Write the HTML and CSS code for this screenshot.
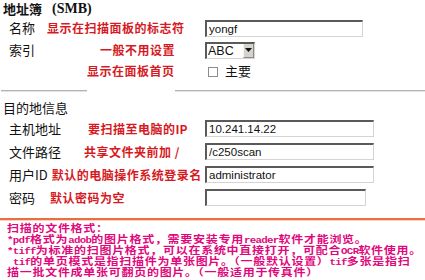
FILE: index.html
```html
<!DOCTYPE html>
<html lang="zh-CN">
<head>
<meta charset="utf-8">
<title>地址簿 (SMB)</title>
<link rel="stylesheet" href="styles.css">
</head>
<body>
<div class="page">
  <div class="title"><span class="title-cjk">地址簿</span><span class="smb">(SMB)</span></div>

  <div class="section top">
    <div class="row r22">
      <div class="lab"><span class="label">名称</span><span class="note n-name">显示在扫描面板的标志符</span></div>
      <div class="field"><input class="txt w158" type="text" value="yongf"></div>
    </div>
    <div class="row r22">
      <div class="lab"><span class="label">索引</span><span class="note n-idx">一般不用设置</span></div>
      <div class="field">
        <div class="select"><span class="sel-val">ABC</span><span class="sel-btn"><svg width="7" height="4" viewBox="0 0 7 4"><path d="M0 0h7L3.5 4z" fill="#111"/></svg></span></div>
      </div>
    </div>
    <div class="row r20">
      <div class="lab"><span class="note n-home">显示在面板首页</span></div>
      <div class="field"><input class="chk" type="checkbox"><span class="label chk-label">主要</span></div>
    </div>
  </div>

  <div class="sep"><span class="seg s1"></span><span class="seg s2"></span></div>

  <div class="group-title">目的地信息</div>

  <div class="section dest">
    <div class="row r23">
      <div class="lab"><span class="label">主机地址</span><span class="note n-host">要扫描至电脑的<span class="note-en">IP</span></span></div>
      <div class="field"><input class="txt w169" type="text" value="10.241.14.22"></div>
    </div>
    <div class="row r23">
      <div class="lab"><span class="label">文件路径</span><span class="note n-path">共享文件夹前加 /</span></div>
      <div class="field"><input class="txt w169" type="text" value="/c250scan"></div>
    </div>
    <div class="row r23">
      <div class="lab"><span class="label">用户ID</span><span class="note n-user">默认的电脑操作系统登录名</span></div>
      <div class="field"><input class="txt w169" type="text" value="administrator"></div>
    </div>
    <div class="row r23">
      <div class="lab"><span class="label">密码</span><span class="note n-pwd">默认密码为空</span></div>
      <div class="field"><input class="txt w161" type="password" value=""></div>
    </div>
  </div>

  <div class="rule"></div>

  <div class="help">
    <div class="line">扫描的文件格式：</div>
    <div class="line"><span class="en">*pdf</span>格式为<span class="en">adob</span>的图片格式，需要安装专用<span class="en">reader</span>软件才能浏览。</div>
    <div class="line"><span class="en">*tiff</span>为标准的扫图片格式，可以在系统中直接打开，可配合<span class="en">OCR</span>软件使用。</div>
    <div class="line indent"><span class="en">tif</span>的单页模式是指扫描件为单张图片。（一般默认设置）<span class="en">tif</span>多张是指扫</div>
    <div class="line">描一批文件成单张可翻页的图片。（一般适用于传真件）</div>
  </div>
</div>
</body>
</html>
```
FILE: styles.css
```css
html, body {
  margin: 0;
  padding: 0;
  background: #ffffff;
}

body {
  font-family: "Noto Sans CJK SC", "Liberation Sans", sans-serif;
  color: #111111;
}

.page {
  width: 425px;
  height: 280px;
  overflow: hidden;
}

/* Title */
.title {
  height: 17px;
  padding-left: 3px;
  line-height: 15px;
  font-weight: bold;
  font-size: 13px;
  display: flex;
  align-items: center;
}

.smb {
  font-family: "Liberation Serif", serif;
  font-size: 14px;
  margin-left: 10px;
}

/* Rows */
.row {
  display: grid;
  grid-template-columns: 205px auto;
  align-items: center;
}

.r22 { height: 22px; }
.r20 { height: 20px; }
.r23 { height: 23px; }

.lab {
  display: flex;
  align-items: center;
  padding-left: 9px;
  white-space: nowrap;
}

.label {
  font-size: 13px;
  line-height: 16px;
}

.note {
  color: #d61a1f;
  font-weight: bold;
  font-size: 12px;
  line-height: 14px;
  letter-spacing: 0.5px;
}

.note-en {
  letter-spacing: 0;
}

.n-name { margin-left: 12px; }
.n-idx  { margin-left: 65px; }
.n-home { margin-left: 78px; }
.n-host { margin-left: 27px; }
.n-path { margin-left: 23px; }
.n-user { margin-left: 4px; }
.n-pwd  { margin-left: 15px; }

.field {
  display: flex;
  align-items: center;
}

/* Inputs */
.txt {
  box-sizing: border-box;
  height: 17px;
  margin: 0;
  padding: 0 2px;
  font-family: "Liberation Sans", Arial, sans-serif;
  font-size: 11.5px;
  color: #111;
  background: #fff;
  border-style: solid;
  border-width: 2px 1px 1px 2px;
  border-color: #5a5a5a #d4d4d4 #d4d4d4 #5a5a5a;
  outline: none;
}

.w158 { width: 158px; }
.w169 { width: 169px; }
.w161 { width: 161px; }

/* Fake select */
.select {
  box-sizing: border-box;
  width: 50px;
  height: 17px;
  display: flex;
  align-items: stretch;
  border-style: solid;
  border-width: 2px 1px 1px 2px;
  border-color: #5a5a5a #d4d4d4 #d4d4d4 #5a5a5a;
  background: #fff;
}

.sel-val {
  flex: 1;
  font-family: "Liberation Sans", Arial, sans-serif;
  font-size: 12.5px;
  line-height: 14px;
  padding-left: 1px;
  color: #111;
}

.sel-btn {
  width: 11px;
  display: flex;
  align-items: center;
  justify-content: center;
  background: #d6d3ce;
  border-left: 1px solid #f4f4f4;
  border-right: 1px solid #8a8a8a;
  border-bottom: 1px solid #8a8a8a;
  box-sizing: border-box;
}

/* Checkbox */
.chk {
  appearance: none;
  -webkit-appearance: none;
  box-sizing: border-box;
  width: 10px;
  height: 10px;
  margin: 1px 0 0 3px;
  border: 1px solid #8c8c8c;
  background: #fff;
}

.chk-label {
  margin-left: 7px;
}

/* Separator */
.sep {
  display: flex;
  justify-content: space-between;
  margin-top: 9px;
  padding-left: 1px;
}

.seg {
  height: 1px;
  border-bottom: 1px solid #e2e2e2;
  background: #b4b4b4;
}

.s1 { width: 86px; }
.s2 { width: 250px; }

.group-title {
  margin-top: 8px;
  padding-left: 3px;
  font-size: 13px;
  line-height: 16px;
  height: 16px;
}

.dest {
  margin-top: 1px;
}

/* Orange rule */
.rule {
  margin-top: 9px;
  height: 2px;
  background: #e8703f;
  border-bottom: 1px solid #f8d3c0;
}

/* Help text */
.help {
  padding: 2px 0 0 7px;
  color: #e0087c;
  font-family: "Liberation Serif", "Noto Sans CJK SC", serif;
  font-weight: bold;
  font-size: 10px;
  line-height: 11px;
  letter-spacing: 0.6px;
  white-space: nowrap;
}

.line {
  height: 11px;
  transform: scaleX(1.2);
  transform-origin: left top;
}

.indent {
  padding-left: 5px;
}

.en {
  font-family: "Liberation Mono", monospace;
  font-size: 9px;
  letter-spacing: -0.6px;
}
```
